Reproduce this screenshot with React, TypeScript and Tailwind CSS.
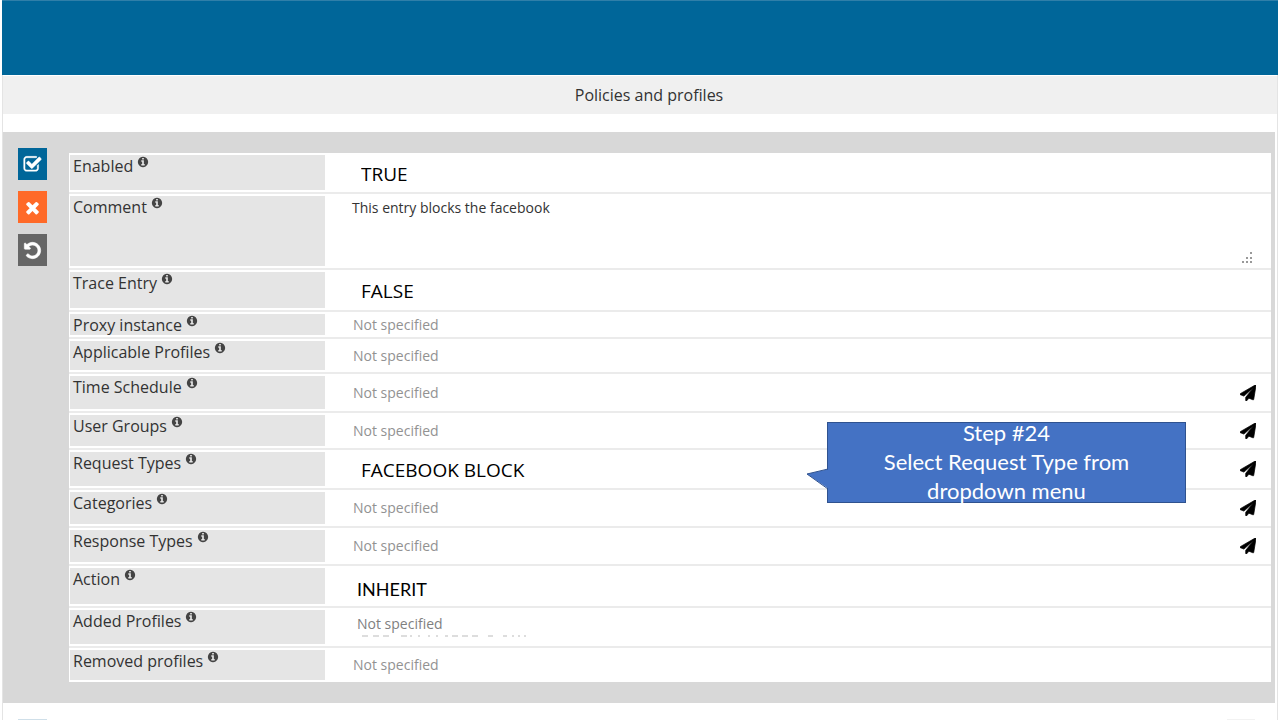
import React from 'react';

type FieldKind = 'select' | 'textarea' | 'text';

interface Field {
  id: string;
  label: string;
  kind: FieldKind;
  value?: string;
  // row height and look of the value
  rowClass: string;
  valueClass: string;
  hasSend?: boolean;
}

const bigValue = 'pl-9 pt-[2px] text-[19px] leading-6 text-black';
const emptyValue = 'pl-7 text-[14px] leading-5 text-[#555] placeholder:text-[#929292]';

const fields: Field[] = [
  { id: 'enabled', label: 'Enabled', kind: 'select', value: 'TRUE', rowClass: 'h-[41px]', valueClass: bigValue },
  {
    id: 'comment',
    label: 'Comment',
    kind: 'textarea',
    value: 'This entry blocks the facebook',
    rowClass: 'h-[76px]',
    valueClass: 'pl-[27px] pt-1 text-[14px] leading-5 text-[#333]',
  },
  { id: 'trace', label: 'Trace Entry', kind: 'select', value: 'FALSE', rowClass: 'h-[42px]', valueClass: bigValue },
  { id: 'proxy', label: 'Proxy instance', kind: 'text', rowClass: 'h-[27px]', valueClass: emptyValue },
  { id: 'applicable', label: 'Applicable Profiles', kind: 'text', rowClass: 'h-[35px]', valueClass: emptyValue },
  { id: 'schedule', label: 'Time Schedule', kind: 'text', rowClass: 'h-[39px]', valueClass: emptyValue, hasSend: true },
  { id: 'groups', label: 'User Groups', kind: 'text', rowClass: 'h-[37px]', valueClass: emptyValue, hasSend: true },
  { id: 'request', label: 'Request Types', kind: 'select', value: 'FACEBOOK BLOCK', rowClass: 'h-[40px]', valueClass: bigValue, hasSend: true },
  { id: 'categories', label: 'Categories', kind: 'text', rowClass: 'h-[38px]', valueClass: emptyValue, hasSend: true },
  { id: 'response', label: 'Response Types', kind: 'text', rowClass: 'h-[38px]', valueClass: emptyValue, hasSend: true },
  {
    id: 'action',
    label: 'Action',
    kind: 'select',
    value: 'INHERIT',
    rowClass: 'h-[42px]',
    valueClass: "pl-8 pt-[6px] font-['Lato','Liberation_Sans',sans-serif] text-[18px] leading-6 text-black",
  },
  {
    id: 'added',
    label: 'Added Profiles',
    kind: 'text',
    rowClass: 'h-[40px]',
    valueClass: 'pl-8 pb-[6px] text-[14px] leading-5 text-[#666] placeholder:text-[#7f7f7f]',
  },
  { id: 'removed', label: 'Removed profiles', kind: 'text', rowClass: 'h-[34px]', valueClass: emptyValue },
];

const CHECK =
  'M1472 930v318q0 119-84.5 203.5t-203.5 84.5h-832q-119 0-203.5-84.5t-84.5-203.5v-832q0-119 84.5-203.5t203.5-84.5h832q63 0 117 25 15 7 18 23 3 17-9 29l-49 49q-10 10-23 10-3 0-9-2-23-6-45-6h-832q-66 0-113 47t-47 113v832q0 66 47 113t113 47h832q66 0 113-47t47-113v-254q0-13 9-22l64-64q10-10 23-10 6 0 12 3 20 8 20 29zm231-489l-814 814q-24 24-57 24t-57-24l-430-430q-24-24-24-57t24-57l110-110q24-24 57-24t57 24l263 263 647-647q24-24 57-24t57 24l110 110q24 24 24 57t-24 57z';
const TIMES =
  'M1490 1322q0 40-28 68l-136 136q-28 28-68 28t-68-28l-294-294-294 294q-28 28-68 28t-68-28l-136-136q-28-28-28-68t28-68l294-294-294-294q-28-28-28-68t28-68l136-136q28-28 68-28t68 28l294 294 294-294q28-28 68-28t68 28l136 136q28 28 28 68t-28 68l-294 294 294 294q28 28 28 68z';
const UNDO =
  'M1664 896q0 156-61 298t-164 245-245 164-298 61q-172 0-327-72.5t-264-204.5q-7-10-6.5-22.5t8.5-20.5l137-138q10-9 25-9 16 2 23 12 73 95 179 147t225 52q104 0 198.5-40.5t163.5-109.5 109.5-163.5 40.5-198.5-40.5-198.5-109.5-163.5-163.5-109.5-198.5-40.5q-98 0-188 35.5t-160 101.5l137 138q31 30 14 69-17 40-59 40h-448q-26 0-45-19t-19-45v-448q0-42 40-59 39-17 69 14l130 129q107-101 244.5-156.5t284.5-55.5q156 0 298 61t245 164 164 245 61 298z';
const PLANE =
  'M1764 11q33 24 27 64l-256 1536q-5 29-32 45-14 8-31 8-11 0-24-5l-453-185-242 295q-18 23-49 23-13 0-22-4-19-7-30.5-23.5t-11.5-36.5v-349l864-1059-1069 925-395-162q-37-14-40-55-2-40 32-59l1664-960q15-9 32-9 20 0 36 11z';
const INFO =
  'M1152 1376v-160q0-14-9-23t-23-9h-96v-512q0-14-9-23t-23-9h-320q-14 0-23 9t-9 23v160q0 14 9 23t23 9h96v320h-96q-14 0-23 9t-9 23v160q0 14 9 23t23 9h448q14 0 23-9t9-23zm-128-896v-160q0-14-9-23t-23-9h-192q-14 0-23 9t-9 23v160q0 14 9 23t23 9h192q14 0 23-9t9-23zm640 416q0 209-103 385.5t-279.5 279.5-385.5 103-385.5-103-279.5-279.5-103-385.5 103-385.5 279.5-279.5 385.5-103 385.5 103 279.5 279.5 103 385.5z';

const Icon = ({ path, className }: { path: string; className: string }) => (
  <svg viewBox="0 0 1792 1792" fill="currentColor" className={className} aria-hidden="true">
    <path d={path} />
  </svg>
);

const FieldControl = ({ field }: { field: Field }) => {
  const base = 'block w-full min-w-0 appearance-none bg-transparent outline-none';

  if (field.kind === 'select') {
    return (
      <select id={field.id} defaultValue={field.value} className={`${base} ${field.valueClass}`}>
        <option>{field.value}</option>
      </select>
    );
  }
  if (field.kind === 'textarea') {
    return (
      <textarea
        id={field.id}
        defaultValue={field.value}
        className={`${base} h-full resize-none ${field.valueClass}`}
      />
    );
  }
  return <input id={field.id} type="text" placeholder="Not specified" className={`${base} ${field.valueClass}`} />;
};

const Callout = () => (
  <div className="absolute -top-7 right-[85px] z-10 flex h-[81px] w-[359px] items-center justify-center border border-[#2f528f] bg-[#4472c4] pb-[2px]">
    <svg viewBox="0 0 23 22" className="absolute top-[45px] -left-[22px] h-[22px] w-[23px]" aria-hidden="true">
      <path d="M23 1 L1 6 L23 21 Z" fill="#4472c4" />
      <path d="M22 1 L1 6 L22 21" fill="none" stroke="#2f528f" />
    </svg>
    <p className="text-center font-['Lato','Liberation_Sans',sans-serif] text-[22px] leading-[29px] text-white">
      Step #24
      <br />
      Select Request Type from
      <br />
      dropdown menu
    </p>
  </div>
);

const FieldRow = ({ field, isLast }: { field: Field; isLast: boolean }) => (
  <div className={`relative flex ${field.rowClass} ${isLast ? '' : 'border-b-2 border-[#ebebeb]'}`}>
    <div className="flex w-64 shrink-0 py-[2px] pl-px">
      <label htmlFor={field.id} className="flex flex-1 items-start bg-[#e5e5e5] pl-[3px] text-[16px] leading-[22px] text-[#333]">
        {field.label}
        <Icon path={INFO} className="mt-[1px] ml-1 h-3 w-3 text-[#444]" />
      </label>
    </div>

    <div className="flex min-w-0 flex-1 items-center">
      <FieldControl field={field} />
      {field.hasSend && (
        <button type="button" aria-label={`Send ${field.label}`} className="mr-[15px] shrink-0 text-black">
          <Icon path={PLANE} className="h-4 w-4 stroke-current stroke-[80]" />
        </button>
      )}
    </div>

    {/* resize grip */}
    {field.kind === 'textarea' && (
      <svg viewBox="0 0 12 12" className="absolute right-[18px] bottom-1 h-3 w-3" fill="#999" aria-hidden="true">
        <path d="M9 0h2v2h-2zM5 5h2v2h-2zM9 5h2v2h-2zM1 9h2v2h-2zM5 9h2v2h-2zM9 9h2v2h-2z" />
      </svg>
    )}

    {/* tops of the covered line */}
    {field.id === 'added' && (
      <svg viewBox="0 0 166 3" className="absolute bottom-[9px] left-[292px] h-[3px] w-[166px]" aria-hidden="true">
        <path
          d="M1 2h6M12 2h6M22 2h6M40 2h6M49 2h2M57 2h2M67 2h2M75 2h2M84 2h3M91 2h6M101 2h6M111 2h6M127 2h5M142 2h4M151 2h2M157 2h2M163 2h2"
          stroke="#bbb"
        />
      </svg>
    )}

    {field.id === 'request' && <Callout />}
  </div>
);

const App = () => {
  return (
    <div className="min-h-screen bg-white px-[2px] font-['Open_Sans','Noto_Sans',sans-serif]">
      <header className="h-[75px] border-t border-[#2f7fa9] bg-[#006699]" />

      <div className="border-x border-[#e4e4e4]">
        <h1 className="border-t border-white bg-[#f0f0f0] pt-[6px] pb-[5px] pl-[18px] text-center text-[16px] leading-[27px] text-[#333]">
          Policies and profiles
        </h1>

        <main className="mt-[18px] mr-[2px] flex bg-[#d8d8d8] pr-1 pb-[21px]">
          <div className="flex w-[66px] shrink-0 flex-col gap-[11px] pt-4 pl-[15px]">
            <button type="button" aria-label="Save" className="flex h-8 w-[29px] items-center justify-center bg-[#006699] text-white">
              <Icon path={CHECK} className="h-[19px] w-[19px] stroke-current stroke-[40]" />
            </button>
            <button type="button" aria-label="Cancel" className="flex h-8 w-[29px] items-center justify-center bg-[#ff6a28] text-white">
              <Icon path={TIMES} className="h-[19px] w-[19px]" />
            </button>
            <button type="button" aria-label="Reset" className="flex h-8 w-[29px] items-center justify-center bg-[#666] text-white">
              <Icon path={UNDO} className="h-[19px] w-[19px] stroke-current stroke-[60]" />
            </button>
          </div>

          <form className="mt-[21px] min-w-0 flex-1 bg-white">
            {fields.map((field, index) => (
              <FieldRow key={field.id} field={field} isLast={index === fields.length - 1} />
            ))}
          </form>
        </main>

        <div className="flex justify-between pt-4 pr-[22px] pl-[15px]">
          <div className="h-px w-[29px] bg-[#cfdfe9]" />
          <div className="h-px w-7 bg-[#f2f2f2]" />
        </div>
      </div>
    </div>
  );
};

export default App;
